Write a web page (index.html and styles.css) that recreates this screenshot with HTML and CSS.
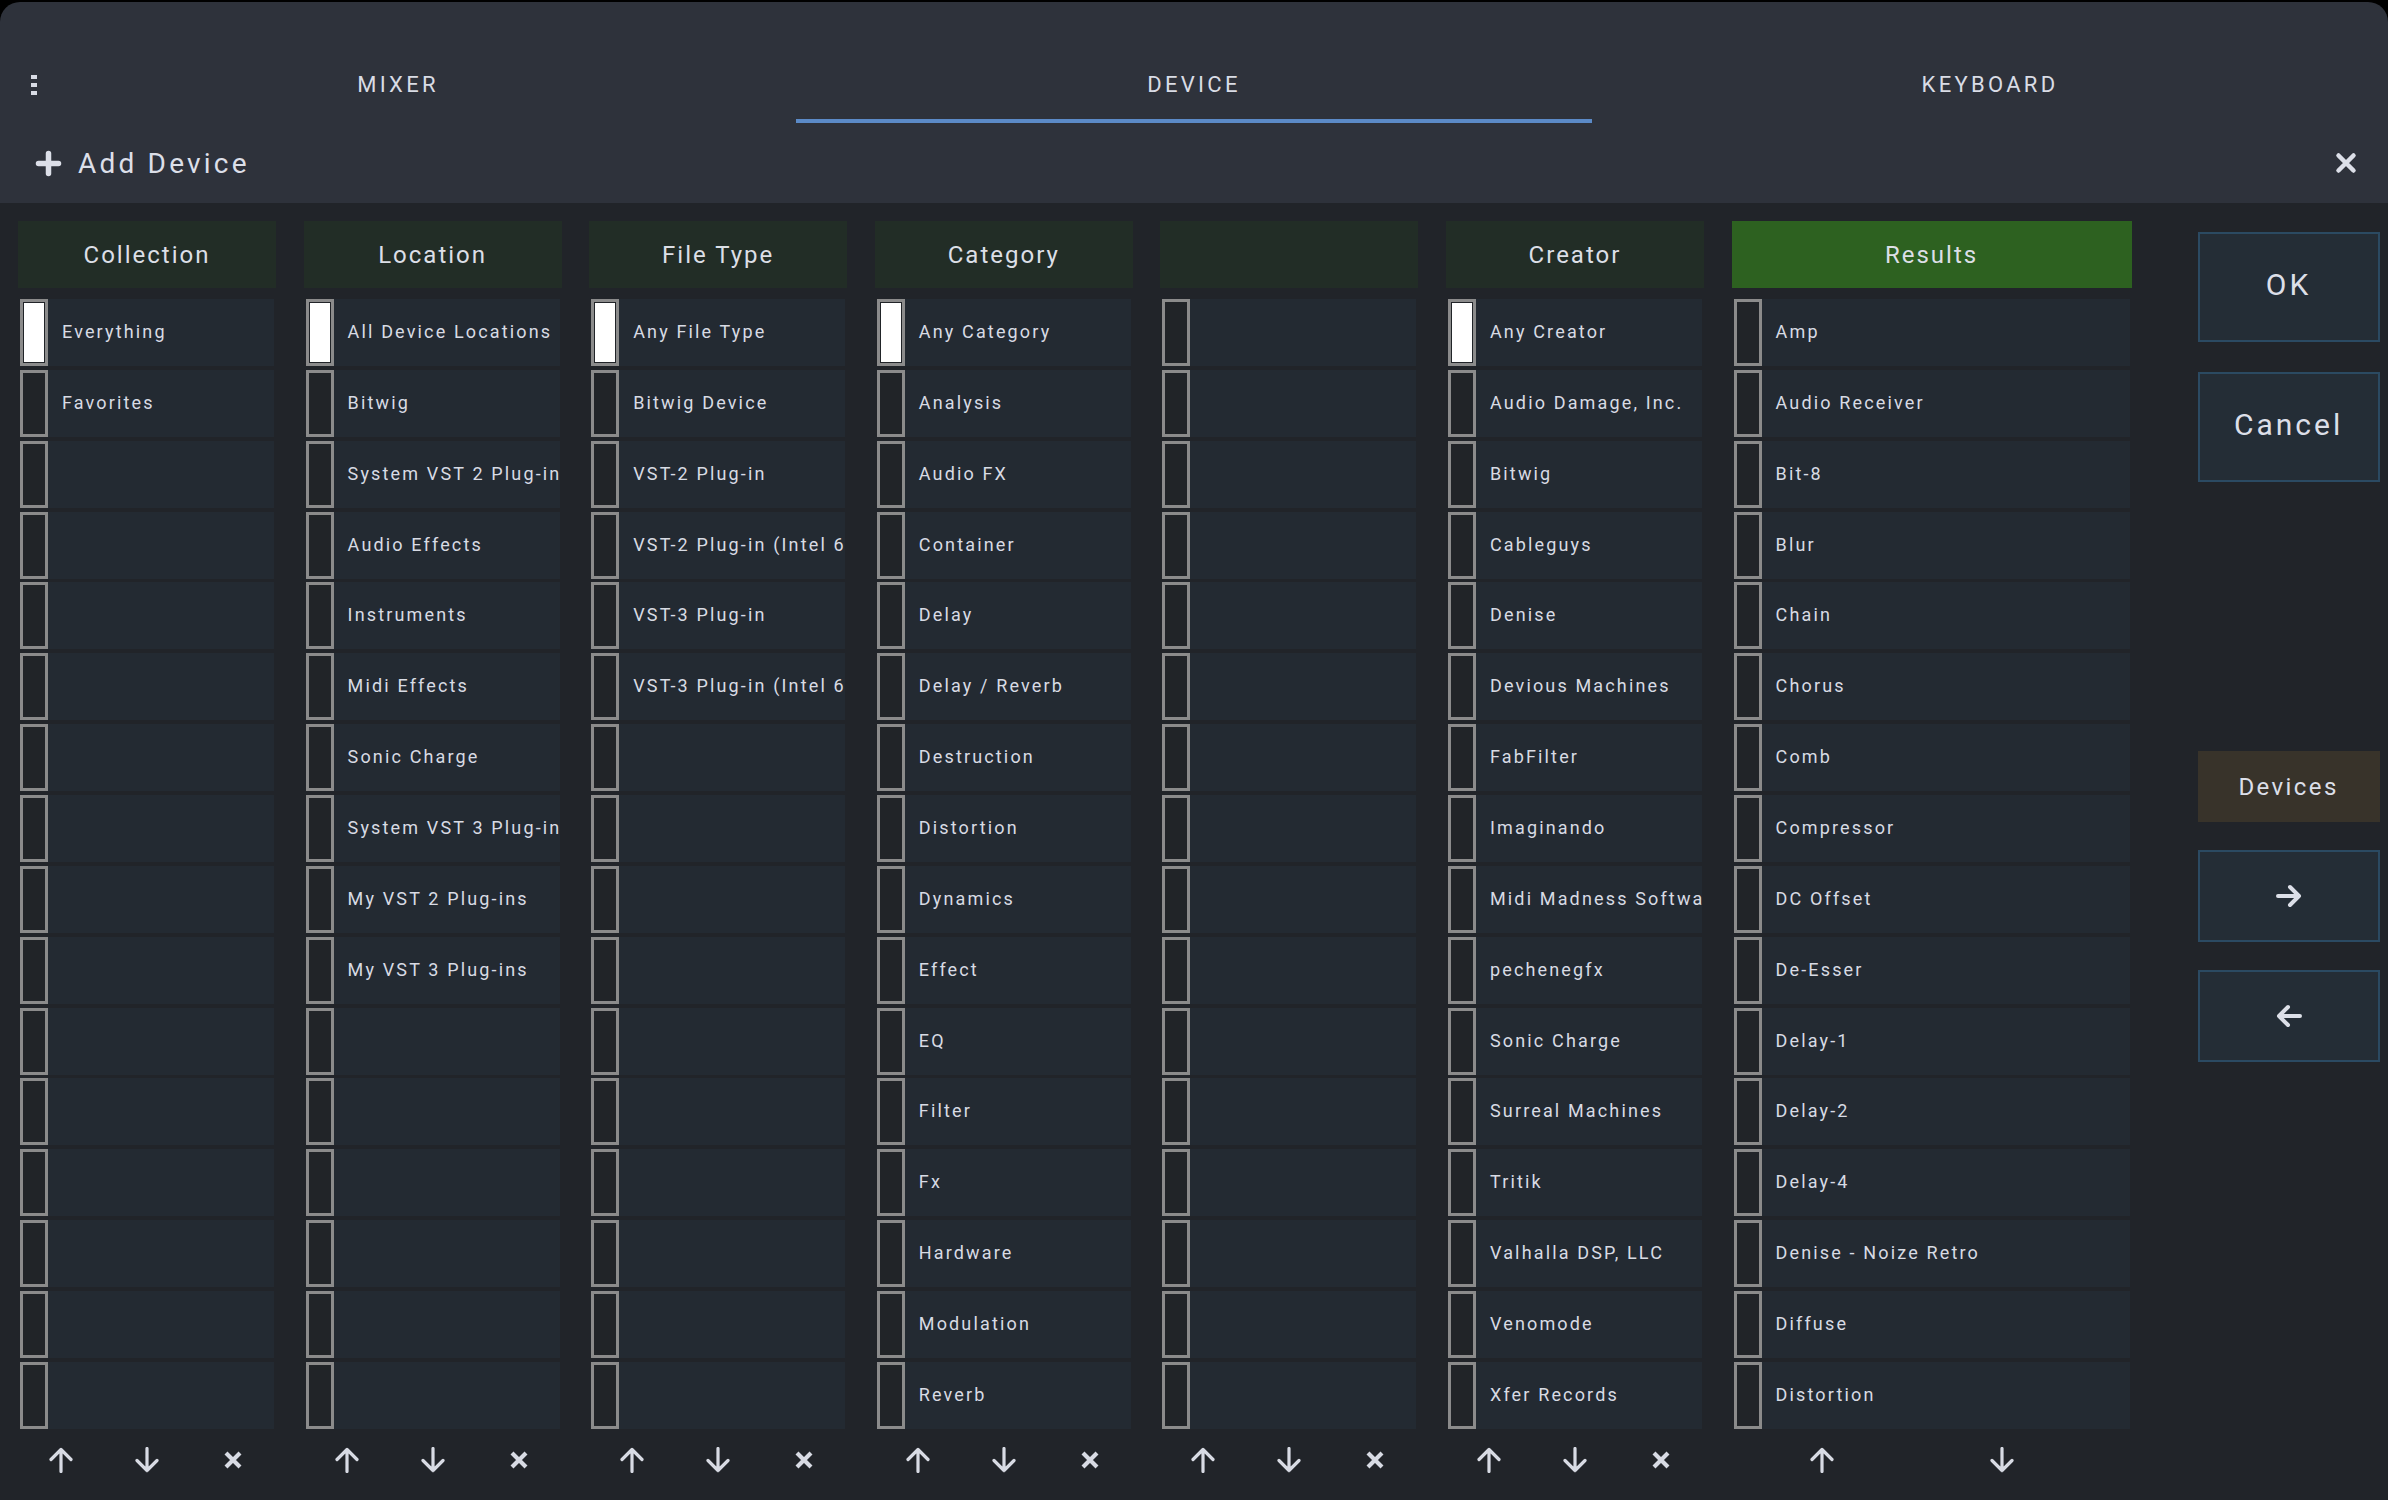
FILE: index.html
```html
<!DOCTYPE html>
<html lang="en">
<head>
<meta charset="utf-8">
<title>Add Device</title>
<link rel="stylesheet" href="styles.css">
</head>
<body>
<div class="app">
  <header class="topbar">
    <nav class="tabs">
      <span class="kebab"><svg width="6" height="20" viewBox="0 0 6 20"><rect x="0" y="0" width="6" height="4"/><rect x="0" y="8" width="6" height="4"/><rect x="0" y="16" width="6" height="4"/></svg></span>
      <div class="tab">MIXER</div>
      <div class="tab active">DEVICE</div>
      <div class="tab">KEYBOARD</div>
    </nav>
    <div class="titlebar">
      <div class="title">
        <svg class="plus" width="27" height="27" viewBox="0 0 27 27"><path d="M13.5 3.5v20M3.5 13.5h20"/></svg>
        <span>Add Device</span>
      </div>
      <svg class="close" width="22" height="22" viewBox="0 0 22 22"><path d="M3.5 3.5l15 15M18.5 3.5l-15 15"/></svg>
    </div>
  </header>

  <main class="content">
    <div class="columns">
      <section class="col">
        <div class="col-head">Collection</div>
        <div class="list">
          <div class="row"><span class="cb on"></span>Everything</div>
          <div class="row"><span class="cb"></span>Favorites</div>
          <div class="row"><span class="cb"></span></div>
          <div class="row"><span class="cb"></span></div>
          <div class="row"><span class="cb"></span></div>
          <div class="row"><span class="cb"></span></div>
          <div class="row"><span class="cb"></span></div>
          <div class="row"><span class="cb"></span></div>
          <div class="row"><span class="cb"></span></div>
          <div class="row"><span class="cb"></span></div>
          <div class="row"><span class="cb"></span></div>
          <div class="row"><span class="cb"></span></div>
          <div class="row"><span class="cb"></span></div>
          <div class="row"><span class="cb"></span></div>
          <div class="row"><span class="cb"></span></div>
          <div class="row"><span class="cb"></span></div>
        </div>
        <div class="col-foot">
          <button class="ic"><svg width="26" height="26" viewBox="0 0 26 26"><path d="M13 24.5V2.5M3 12.5L13 2.5L23 12.5"/></svg></button>
          <button class="ic"><svg width="26" height="26" viewBox="0 0 26 26"><path d="M13 1.5V23.5M3 13.5L13 23.5L23 13.5"/></svg></button>
          <button class="ic x"><svg width="20" height="20" viewBox="0 0 20 20"><path d="M3 3L17 17M17 3L3 17"/></svg></button>
        </div>
      </section>

      <section class="col">
        <div class="col-head">Location</div>
        <div class="list">
          <div class="row"><span class="cb on"></span>All Device Locations</div>
          <div class="row"><span class="cb"></span>Bitwig</div>
          <div class="row"><span class="cb"></span>System VST 2 Plug-ins</div>
          <div class="row"><span class="cb"></span>Audio Effects</div>
          <div class="row"><span class="cb"></span>Instruments</div>
          <div class="row"><span class="cb"></span>Midi Effects</div>
          <div class="row"><span class="cb"></span>Sonic Charge</div>
          <div class="row"><span class="cb"></span>System VST 3 Plug-ins</div>
          <div class="row"><span class="cb"></span>My VST 2 Plug-ins</div>
          <div class="row"><span class="cb"></span>My VST 3 Plug-ins</div>
          <div class="row"><span class="cb"></span></div>
          <div class="row"><span class="cb"></span></div>
          <div class="row"><span class="cb"></span></div>
          <div class="row"><span class="cb"></span></div>
          <div class="row"><span class="cb"></span></div>
          <div class="row"><span class="cb"></span></div>
        </div>
        <div class="col-foot">
          <button class="ic"><svg width="26" height="26" viewBox="0 0 26 26"><path d="M13 24.5V2.5M3 12.5L13 2.5L23 12.5"/></svg></button>
          <button class="ic"><svg width="26" height="26" viewBox="0 0 26 26"><path d="M13 1.5V23.5M3 13.5L13 23.5L23 13.5"/></svg></button>
          <button class="ic x"><svg width="20" height="20" viewBox="0 0 20 20"><path d="M3 3L17 17M17 3L3 17"/></svg></button>
        </div>
      </section>

      <section class="col">
        <div class="col-head">File Type</div>
        <div class="list">
          <div class="row"><span class="cb on"></span>Any File Type</div>
          <div class="row"><span class="cb"></span>Bitwig Device</div>
          <div class="row"><span class="cb"></span>VST-2 Plug-in</div>
          <div class="row"><span class="cb"></span>VST-2 Plug-in (Intel 64-bit)</div>
          <div class="row"><span class="cb"></span>VST-3 Plug-in</div>
          <div class="row"><span class="cb"></span>VST-3 Plug-in (Intel 64-bit)</div>
          <div class="row"><span class="cb"></span></div>
          <div class="row"><span class="cb"></span></div>
          <div class="row"><span class="cb"></span></div>
          <div class="row"><span class="cb"></span></div>
          <div class="row"><span class="cb"></span></div>
          <div class="row"><span class="cb"></span></div>
          <div class="row"><span class="cb"></span></div>
          <div class="row"><span class="cb"></span></div>
          <div class="row"><span class="cb"></span></div>
          <div class="row"><span class="cb"></span></div>
        </div>
        <div class="col-foot">
          <button class="ic"><svg width="26" height="26" viewBox="0 0 26 26"><path d="M13 24.5V2.5M3 12.5L13 2.5L23 12.5"/></svg></button>
          <button class="ic"><svg width="26" height="26" viewBox="0 0 26 26"><path d="M13 1.5V23.5M3 13.5L13 23.5L23 13.5"/></svg></button>
          <button class="ic x"><svg width="20" height="20" viewBox="0 0 20 20"><path d="M3 3L17 17M17 3L3 17"/></svg></button>
        </div>
      </section>

      <section class="col">
        <div class="col-head">Category</div>
        <div class="list">
          <div class="row"><span class="cb on"></span>Any Category</div>
          <div class="row"><span class="cb"></span>Analysis</div>
          <div class="row"><span class="cb"></span>Audio FX</div>
          <div class="row"><span class="cb"></span>Container</div>
          <div class="row"><span class="cb"></span>Delay</div>
          <div class="row"><span class="cb"></span>Delay / Reverb</div>
          <div class="row"><span class="cb"></span>Destruction</div>
          <div class="row"><span class="cb"></span>Distortion</div>
          <div class="row"><span class="cb"></span>Dynamics</div>
          <div class="row"><span class="cb"></span>Effect</div>
          <div class="row"><span class="cb"></span>EQ</div>
          <div class="row"><span class="cb"></span>Filter</div>
          <div class="row"><span class="cb"></span>Fx</div>
          <div class="row"><span class="cb"></span>Hardware</div>
          <div class="row"><span class="cb"></span>Modulation</div>
          <div class="row"><span class="cb"></span>Reverb</div>
        </div>
        <div class="col-foot">
          <button class="ic"><svg width="26" height="26" viewBox="0 0 26 26"><path d="M13 24.5V2.5M3 12.5L13 2.5L23 12.5"/></svg></button>
          <button class="ic"><svg width="26" height="26" viewBox="0 0 26 26"><path d="M13 1.5V23.5M3 13.5L13 23.5L23 13.5"/></svg></button>
          <button class="ic x"><svg width="20" height="20" viewBox="0 0 20 20"><path d="M3 3L17 17M17 3L3 17"/></svg></button>
        </div>
      </section>

      <section class="col">
        <div class="col-head"></div>
        <div class="list">
          <div class="row"><span class="cb"></span></div>
          <div class="row"><span class="cb"></span></div>
          <div class="row"><span class="cb"></span></div>
          <div class="row"><span class="cb"></span></div>
          <div class="row"><span class="cb"></span></div>
          <div class="row"><span class="cb"></span></div>
          <div class="row"><span class="cb"></span></div>
          <div class="row"><span class="cb"></span></div>
          <div class="row"><span class="cb"></span></div>
          <div class="row"><span class="cb"></span></div>
          <div class="row"><span class="cb"></span></div>
          <div class="row"><span class="cb"></span></div>
          <div class="row"><span class="cb"></span></div>
          <div class="row"><span class="cb"></span></div>
          <div class="row"><span class="cb"></span></div>
          <div class="row"><span class="cb"></span></div>
        </div>
        <div class="col-foot">
          <button class="ic"><svg width="26" height="26" viewBox="0 0 26 26"><path d="M13 24.5V2.5M3 12.5L13 2.5L23 12.5"/></svg></button>
          <button class="ic"><svg width="26" height="26" viewBox="0 0 26 26"><path d="M13 1.5V23.5M3 13.5L13 23.5L23 13.5"/></svg></button>
          <button class="ic x"><svg width="20" height="20" viewBox="0 0 20 20"><path d="M3 3L17 17M17 3L3 17"/></svg></button>
        </div>
      </section>

      <section class="col">
        <div class="col-head">Creator</div>
        <div class="list">
          <div class="row"><span class="cb on"></span>Any Creator</div>
          <div class="row"><span class="cb"></span>Audio Damage, Inc.</div>
          <div class="row"><span class="cb"></span>Bitwig</div>
          <div class="row"><span class="cb"></span>Cableguys</div>
          <div class="row"><span class="cb"></span>Denise</div>
          <div class="row"><span class="cb"></span>Devious Machines</div>
          <div class="row"><span class="cb"></span>FabFilter</div>
          <div class="row"><span class="cb"></span>Imaginando</div>
          <div class="row"><span class="cb"></span>Midi Madness Software</div>
          <div class="row"><span class="cb"></span>pechenegfx</div>
          <div class="row"><span class="cb"></span>Sonic Charge</div>
          <div class="row"><span class="cb"></span>Surreal Machines</div>
          <div class="row"><span class="cb"></span>Tritik</div>
          <div class="row"><span class="cb"></span>Valhalla DSP, LLC</div>
          <div class="row"><span class="cb"></span>Venomode</div>
          <div class="row"><span class="cb"></span>Xfer Records</div>
        </div>
        <div class="col-foot">
          <button class="ic"><svg width="26" height="26" viewBox="0 0 26 26"><path d="M13 24.5V2.5M3 12.5L13 2.5L23 12.5"/></svg></button>
          <button class="ic"><svg width="26" height="26" viewBox="0 0 26 26"><path d="M13 1.5V23.5M3 13.5L13 23.5L23 13.5"/></svg></button>
          <button class="ic x"><svg width="20" height="20" viewBox="0 0 20 20"><path d="M3 3L17 17M17 3L3 17"/></svg></button>
        </div>
      </section>

      <section class="col results">
        <div class="col-head">Results</div>
        <div class="list">
          <div class="row"><span class="cb"></span>Amp</div>
          <div class="row"><span class="cb"></span>Audio Receiver</div>
          <div class="row"><span class="cb"></span>Bit-8</div>
          <div class="row"><span class="cb"></span>Blur</div>
          <div class="row"><span class="cb"></span>Chain</div>
          <div class="row"><span class="cb"></span>Chorus</div>
          <div class="row"><span class="cb"></span>Comb</div>
          <div class="row"><span class="cb"></span>Compressor</div>
          <div class="row"><span class="cb"></span>DC Offset</div>
          <div class="row"><span class="cb"></span>De-Esser</div>
          <div class="row"><span class="cb"></span>Delay-1</div>
          <div class="row"><span class="cb"></span>Delay-2</div>
          <div class="row"><span class="cb"></span>Delay-4</div>
          <div class="row"><span class="cb"></span>Denise - Noize Retro</div>
          <div class="row"><span class="cb"></span>Diffuse</div>
          <div class="row"><span class="cb"></span>Distortion</div>
        </div>
        <div class="col-foot">
          <button class="ic"><svg width="26" height="26" viewBox="0 0 26 26"><path d="M13 24.5V2.5M3 12.5L13 2.5L23 12.5"/></svg></button>
          <button class="ic"><svg width="26" height="26" viewBox="0 0 26 26"><path d="M13 1.5V23.5M3 13.5L13 23.5L23 13.5"/></svg></button>
        </div>
      </section>
    </div>

    <aside class="side">
      <button class="btn big">OK</button>
      <button class="btn big cancel">Cancel</button>
      <div class="devices">Devices</div>
      <button class="btn arrow"><svg width="28" height="26" viewBox="0 0 28 26"><path d="M3 13H24M15 4L24 13L15 22"/></svg></button>
      <button class="btn arrow"><svg width="28" height="26" viewBox="0 0 28 26"><path d="M25 13H4M13 4L4 13L13 22"/></svg></button>
    </aside>
  </main>
</div>
</body>
</html>
```

FILE: styles.css
```css
* {
  box-sizing: border-box;
  margin: 0;
  padding: 0;
}

html, body {
  background: #000;
}

body {
  font-family: Roboto, "Liberation Sans", sans-serif;
  color: #d8dbe4;
}

button {
  font: inherit;
  color: inherit;
  background: none;
  border: none;
  cursor: pointer;
}

.app {
  width: 2388px;
  height: 1500px;
  display: flex;
  flex-direction: column;
  padding-top: 2px;
  overflow: hidden;
}

/* ---------- top bar ---------- */
.topbar {
  flex: none;
  background: #2e323b;
  border-radius: 20px 20px 0 0;
}

.tabs {
  position: relative;
  display: flex;
  height: 121px;
}

.tab {
  flex: 1;
  display: flex;
  align-items: center;
  justify-content: center;
  padding-top: 47px;
  border-bottom: 4px solid transparent;
  font-size: 22px;
  letter-spacing: 3.3px;
  color: #d9dce5;
}

.tab.active {
  border-bottom-color: #5b8ac7;
}

.kebab {
  position: absolute;
  left: 31px;
  top: 73px;
  display: flex;
}

.kebab svg {
  fill: #d9dce5;
}

.titlebar {
  height: 80px;
  display: flex;
  align-items: center;
  padding: 0 31px 0 35px;
}

.title {
  flex: 1;
  display: flex;
  align-items: center;
  gap: 16px;
  font-size: 28px;
  letter-spacing: 3.2px;
  color: #dcdfe8;
}

.plus path {
  fill: none;
  stroke: #dcdfe8;
  stroke-width: 5.5;
  stroke-linecap: round;
}

.close path {
  fill: none;
  stroke: #dcdfe8;
  stroke-width: 4.5;
  stroke-linecap: round;
}

/* ---------- content ---------- */
.content {
  flex: 1;
  display: flex;
  background: #212429;
  padding: 18px 0 0 18px;
}

.columns {
  display: flex;
  gap: 27.6px;
}

.col {
  width: 258px;
  display: flex;
  flex-direction: column;
}

.col.results {
  width: 400px;
}

.col-head {
  height: 67px;
  margin-bottom: 11px;
  background: #222d26;
  display: flex;
  align-items: center;
  justify-content: center;
  font-size: 24px;
  letter-spacing: 2px;
  color: #dcdfe6;
}

.results .col-head {
  background: #2d6120;
}

.list {
  display: flex;
  flex-direction: column;
  gap: 3.87px;
  padding: 0 2px;
}

.row {
  height: 67px;
  background: #232a32;
  display: flex;
  align-items: center;
  padding-bottom: 2px;
  font-size: 18px;
  letter-spacing: 2.15px;
  white-space: nowrap;
  overflow: hidden;
  color: #d8dbe4;
}

.cb {
  flex: none;
  align-self: flex-start;
  width: 28px;
  height: 67px;
  margin-right: 14px;
  border: 3px solid #8b8b8b;
  background: #212428;
}

.cb.on {
  background: #ffffff;
  box-shadow: inset 0 0 0 1px #212428;
}

.col-foot {
  height: 62px;
  display: flex;
}

.col-foot .ic {
  width: 86px;
  display: flex;
  align-items: center;
  justify-content: center;
}

.results .col-foot .ic {
  width: 180px;
}

.ic path {
  fill: none;
  stroke: #d8dbe4;
  stroke-width: 3.2;
  stroke-linecap: round;
  stroke-linejoin: round;
}

.ic.x path {
  stroke-width: 4.2;
  stroke-linecap: butt;
}

/* ---------- side buttons ---------- */
.side {
  margin-left: 66px;
  width: 182px;
  display: flex;
  flex-direction: column;
  padding-top: 11px;
}

.btn {
  display: flex;
  align-items: center;
  justify-content: center;
  background: #242d36;
  border: 2px solid #2b4a62;
}

.btn.big {
  height: 110px;
  padding-bottom: 5px;
  font-size: 30px;
  letter-spacing: 3px;
  color: #dcdfe8;
}

.btn.cancel {
  margin-top: 30px;
}

.devices {
  margin-top: 269px;
  height: 71px;
  background: #38332a;
  display: flex;
  align-items: center;
  justify-content: center;
  font-size: 24px;
  letter-spacing: 2.4px;
  color: #dcdfe8;
}

.btn.arrow {
  height: 92px;
  margin-top: 28px;
}

.btn.arrow path {
  fill: none;
  stroke: #dcdfe8;
  stroke-width: 4;
  stroke-linecap: round;
  stroke-linejoin: round;
}
```
